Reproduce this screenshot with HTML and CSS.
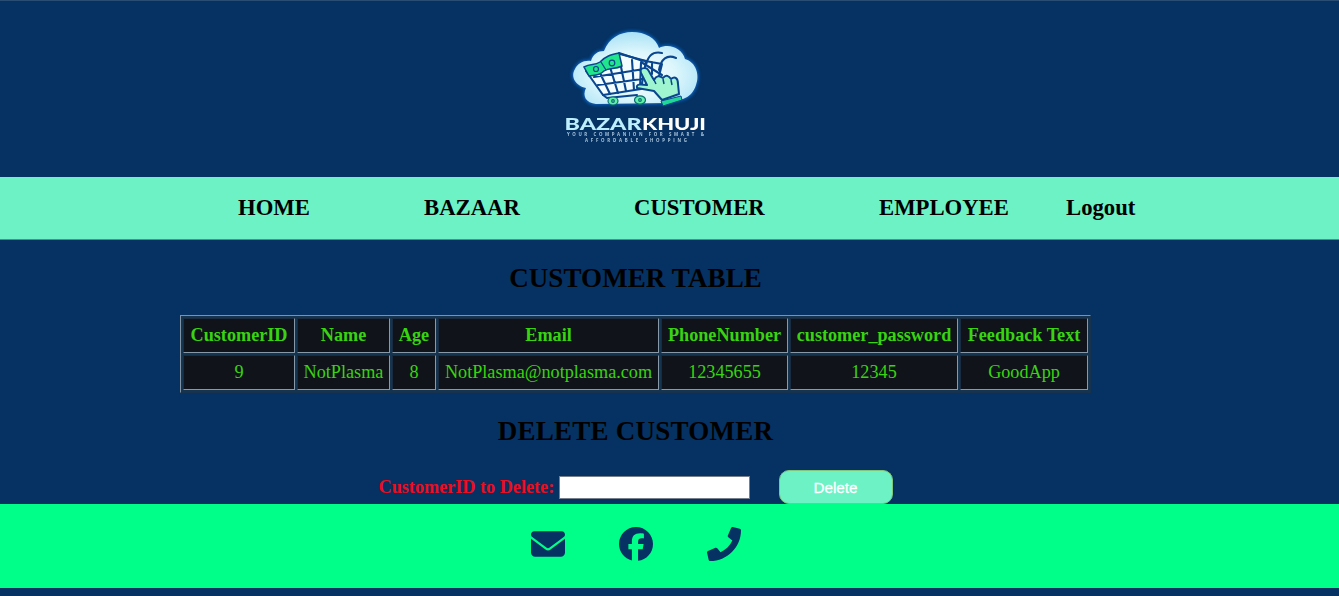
FILE: index.html
```html
<!DOCTYPE html>
<html lang="en">
<head>
<meta charset="utf-8">
<title>BazarKhuji - Customer</title>
<link rel="stylesheet" href="styles.css">
</head>
<body>
<header class="banner">
  <svg class="logo" viewBox="0 0 170 130" width="170" height="130">
    <defs>
      <radialGradient id="cloud" cx="50%" cy="60%" r="60%">
        <stop offset="0" stop-color="#ffffff"/>
        <stop offset="0.55" stop-color="#dcf6fc"/>
        <stop offset="1" stop-color="#a9e2f6"/>
      </radialGradient>
      <filter id="glow" x="-20%" y="-20%" width="140%" height="140%"><feGaussianBlur stdDeviation="1.6"/></filter>
    </defs>
    <path d="M46 84C36 83 32 76 36 68C26 66 20 57 25 49C28 43 34 40 41 41C43 34 48 31 54 31C59 18 70 12 82 12C95 12 106 18 109 28C119 23 132 28 135 39C146 42 150 55 146 65C144 72 139 77 133 79L116 83Z" fill="#0b5cb5" stroke="#0b5cb5" stroke-width="3" filter="url(#glow)"/>
    <path d="M46 84C36 83 32 76 36 68C26 66 20 57 25 49C28 43 34 40 41 41C43 34 48 31 54 31C59 18 70 12 82 12C95 12 106 18 109 28C119 23 132 28 135 39C146 42 150 55 146 65C144 72 139 77 133 79L116 83Z" fill="url(#cloud)"/>
    <g fill="none" stroke="#0a468f" stroke-width="2.1" stroke-linecap="round" stroke-linejoin="round">
      <path d="M36 51L53 75L91 69L96 41L70 34Z" fill="#f3fcff"/>
      <path d="M44 57L94 49M48 65L92 59M50 53L60 74M60 47L68 73M70 42L76 71M82 40L84 70M91 43L90 68"/>
      <path d="M69 33L90 40L112 44L108 60M96 45C98 36 102 31 112 33M109 50C111 39 117 34 126 38M53 75L57 78L87 75M91 42L112 55M102 42V54"/>
    </g>
    <path d="M34 47C41 43 44 46 50 42C56 36 60 35 69 33L72 46C64 50 60 47 54 51C49 56 45 55 39 56Z" fill="#20e58b" stroke="#0a468f" stroke-width="1.5"/>
    <g fill="none" stroke="#0a468f" stroke-width="1.2"><circle cx="46" cy="49" r="2.5"/><circle cx="62" cy="43" r="2.8"/><path d="M51 42L56 50"/></g>
    <path d="M94 48C98 47 99 52 104 60C106 56 109 55 113 58C116 54 119 56 121 59C125 56 128 58 128 64L129 74L112 80L104 71L87 68C86 64 90 64 97 65L91 53C90 50 91 48 94 48Z" fill="#9ff5cf" stroke="#0a468f" stroke-width="2" stroke-linejoin="round"/>
    <path d="M104 60L106 64M113 59L114 64M121 60L122 65" stroke="#0a468f" stroke-width="1.5"/>
    <path d="M111 81L131 76L132 80L113 86Z" fill="#20d896" stroke="#0a468f" stroke-width="1"/>
    <g fill="#62efa7" stroke="#0a6c72" stroke-width="1.2"><ellipse cx="63" cy="81" rx="5" ry="4"/><ellipse cx="90" cy="80" rx="5.500" ry="4.200"/><circle cx="63" cy="81" r="1.3"/><circle cx="90" cy="80" r="1.3"/></g>
    <text class="brand" x="14.500" y="109.500" textLength="77" lengthAdjust="spacingAndGlyphs" fill="#bdeefd">BAZAR</text>
    <text class="brand" x="92" y="109.500" textLength="64" lengthAdjust="spacingAndGlyphs" fill="#fff">KHUJI</text>
    <text class="motto" x="17" y="116" textLength="137" lengthAdjust="spacing">YOUR COMPANION FOR SMART &amp;</text>
    <text class="motto" x="35" y="122" textLength="102" lengthAdjust="spacing">AFFORDABLE SHOPPING</text>
  </svg>
</header>
<nav class="menu">
  <a class="w-home">HOME</a><a class="w-bazaar">BAZAAR</a><a class="w-customer">CUSTOMER</a><a class="w-employee">EMPLOYEE</a><a>Logout</a>
</nav>
<main class="content">
  <h2 class="title">CUSTOMER TABLE</h2>
  <table class="data">
    <colgroup><col class="c1"><col class="c2"><col class="c3"><col class="c4"><col class="c5"><col class="c6"><col class="c7"></colgroup>
    <tr><th>CustomerID</th><th>Name</th><th>Age</th><th>Email</th><th>PhoneNumber</th><th>customer_password</th><th>Feedback Text</th></tr>
    <tr><td>9</td><td>NotPlasma</td><td>8</td><td>NotPlasma@notplasma.com</td><td>12345655</td><td>12345</td><td>GoodApp</td></tr>
  </table>
  <h2 class="title title-delete">DELETE CUSTOMER</h2>
  <form class="remove">
    <label class="remove-label" for="cid">CustomerID to Delete:</label>
    <input class="remove-input" id="cid" type="text">
    <button class="remove-button" type="button">Delete</button>
  </form>
</main>
<footer class="contact">
  <svg width="34" height="34" viewBox="0 0 512 512"><path d="M48 64C21.500 64 0 85.500 0 112c0 15.100 7.100 29.300 19.200 38.400L236.800 313.600c11.400 8.500 27 8.500 38.400 0L492.800 150.400c12.100-9.100 19.200-23.300 19.200-38.400 0-26.500-21.500-48-48-48H48zM0 176V384c0 35.300 28.700 64 64 64H448c35.300 0 64-28.700 64-64V176L294.400 339.200c-22.800 17.100-54 17.100-76.800 0L0 176z"/></svg>
  <svg width="34" height="34" viewBox="0 0 512 512"><path d="M512 256C512 114.600 397.400 0 256 0S0 114.600 0 256C0 376 82.700 476.800 194.200 504.500V334.200H141.400V256h52.800V222.300c0-87.100 39.400-127.500 125-127.500 16.200 0 44.200 3.200 55.700 6.400V172c-6-.6-16.500-1-29.600-1-42 0-58.200 15.900-58.200 57.200V256h83.600l-14.400 78.200H287V510.100C413.800 494.800 512 386.900 512 256z"/></svg>
  <svg width="34" height="34" viewBox="0 0 512 512"><path d="M493.400 24.600l-104-24c-11.300-2.600-22.900 3.300-27.500 13.900l-48 112c-4.200 9.800-1.400 21.300 6.900 28l60.600 49.600c-36 76.700-98.900 140.500-177.200 177.200l-49.600-60.600c-6.800-8.300-18.200-11.100-28-6.900l-112 48C3.900 366.500-2 378.100.6 389.400l24 104C27.100 504.200 36.700 512 48 512c256.100 0 464-207.500 464-464 0-11.200-7.700-20.900-18.600-23.400z"/></svg>
</footer>
</body>
</html>
```
FILE: styles.css
```css
* { box-sizing: border-box; }
body {
  margin: 0;
  height: 596px;
  overflow: hidden;
  background: #053262;
  font-family: "Liberation Serif", "Times New Roman", serif;
  font-size: 18.2px;
  color: #000;
}
.banner {
  height: 177px;
  padding: 19px 0 0 550px;
  border-top: 1px solid #2a4e73;
}
.logo { display: block; filter: blur(0.4px); }
.brand { font: 900 17.5px/1 Lato, sans-serif; }
.motto { font: 700 4.4px/1 "Open Sans", sans-serif; fill: #a9c4dc; }
.menu {
  display: flex;
  align-items: center;
  height: 62.5px;
  padding-left: 238px;
  border-bottom: 1px solid #3c9494;
  background: #6cf2c5;
  font-size: 22.7px;
  font-weight: bold;
}
.w-home { width: 186px; }
.w-bazaar { width: 210px; }
.w-customer { width: 245px; }
.w-employee { width: 187px; }
.content {
  display: flex;
  flex-direction: column;
  align-items: center;
  width: 1271px;
  height: 264.5px;
}
.title {
  margin: 23.500px 0 22px;
  font-size: 27px;
  letter-spacing: 0.1px;
  line-height: 30px;
}
.data {
  width: 911px;
  height: 78px;
  table-layout: fixed;
  border: 1px solid #17324d;
  border-top-color: #8091a2;
  border-left-color: #8091a2;
  border-spacing: 2px;
  background: #15344f;
}
.data th, .data td {
  padding: 0;
  border: 1px solid #182b40;
  border-right-color: #8798a8;
  border-bottom-color: #8798a8;
  background: #10131a;
  color: #38d411;
  text-align: center;
  white-space: nowrap;
}
.c1 { width: 112px; }
.c2 { width: 93px; }
.c3 { width: 44px; }
.c4 { width: 221px; }
.c5 { width: 127px; }
.c6 { width: 168px; }
.c7 { width: 128px; }
.title-delete { margin: 23px 0 24px; letter-spacing: 0.25px; }
.remove {
  display: flex;
  align-items: center;
  height: 34px;
}
.remove-label { width: 180px; color: #ee0c20; font-weight: bold; white-space: nowrap; }
.remove-input {
  width: 191px;
  height: 23px;
  margin: 0;
  border: 1px solid #767f8c;
  background: #fff;
}
.remove-button {
  width: 114px;
  height: 34px;
  margin-left: 29px;
  padding: 0;
  border: 1px solid #7fc77c;
  border-radius: 10px;
  background: #6cf2c5;
  color: #fff;
  font: 15.2px "Liberation Sans", Arial, sans-serif;
  -webkit-text-stroke: 0.3px #fff;
}
.contact {
  display: flex;
  justify-content: center;
  gap: 54px;
  width: 100%;
  height: 84px;
  padding: 23px 68px 0 0;
  background: #00ff88;
  fill: #053262;
}
```
